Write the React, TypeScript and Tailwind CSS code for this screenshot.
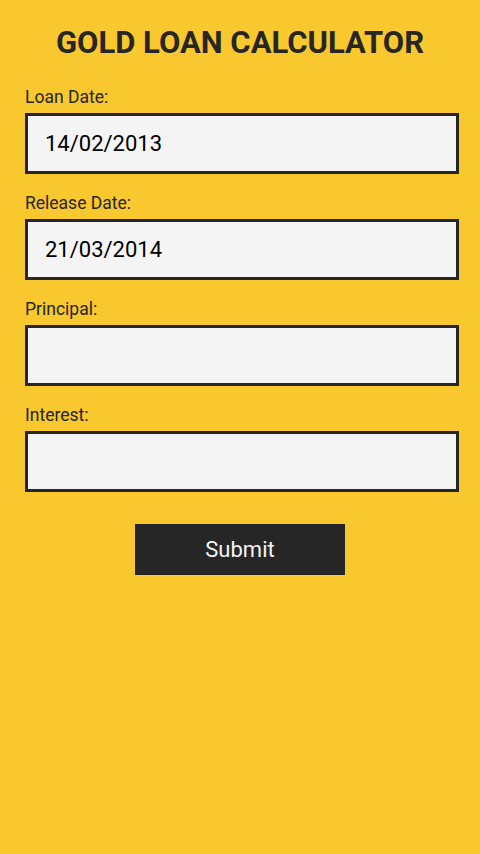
import React from "react";

const fields = [
  { label: "Loan Date:", value: "14/02/2013" },
  { label: "Release Date:", value: "21/03/2014" },
  { label: "Principal:", value: "" },
  { label: "Interest:", value: "" },
];

export default function App() {
  return (
    <div
      className="min-h-[854px] w-full bg-[#F9C72E] pt-[23.5px] text-[#262626]"
      style={{ fontFamily: "Roboto, 'Noto Sans', sans-serif" }}
    >
      <h1 className="text-center text-[31px] font-bold leading-[38px] text-[#262626]">
        GOLD LOAN CALCULATOR
      </h1>
      <div className="mt-[23px] flex flex-col gap-[17px] pl-[25px] pr-[21px]">
        {fields.map((f) => (
          <div key={f.label} className="flex flex-col gap-[4px]">
            <div className="text-[17.5px] leading-[24px] text-[#262626]">{f.label}</div>
            <div className="flex h-[61px] items-center border-[3px] border-[#262626] bg-[#F4F4F4] pl-[17px] text-[22px] text-black">
              {f.value}
            </div>
          </div>
        ))}
      </div>
      <div className="mt-[32px] flex justify-center">
        <button className="flex h-[51px] w-[210px] items-center justify-center bg-[#262626] text-[22px] text-[#F4F4F4]">
          Submit
        </button>
      </div>
    </div>
  );
}
